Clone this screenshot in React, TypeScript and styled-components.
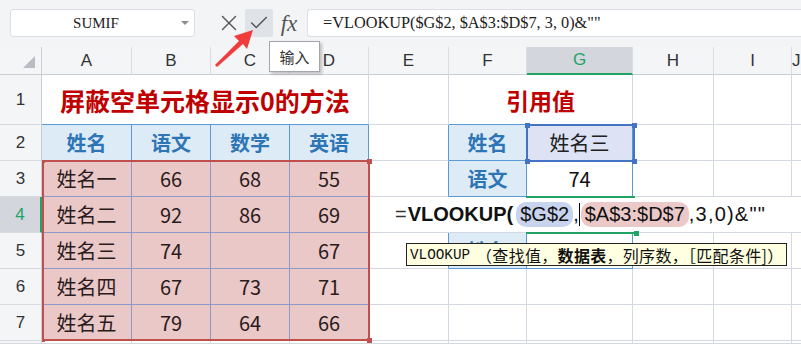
import React from 'react';
import styled, { createGlobalStyle } from 'styled-components';
import { X, Check } from 'lucide-react';

const GRID = '#d3d8e3';
const BLUE_LINE = '#5b9bd5';
const TABLE_LINE = '#8f99c6';
const GREEN = '#21a366';
const CJK = `'Noto Sans CJK SC', 'Noto Sans', sans-serif`;
const SONG = `'Liberation Serif', 'Noto Sans CJK SC', serif`;
const MONO = `'Liberation Mono', 'DejaVu Sans Mono', monospace`;

const GlobalStyle = createGlobalStyle`
  html, body {
    margin: 0;
    padding: 0;
    background: #fff;
  }
  body {
    font-family: ${CJK};
    overflow: hidden;
  }
`;

const Page = styled.div`
  position: relative;
  width: 801px;
  height: 344px;
  overflow: hidden;
  background: #fff;
`;

/* formula bar */

const Toolbar = styled.div`
  position: relative;
  z-index: 10;
  height: 47px;
  box-sizing: border-box;
  padding: 9px 0 0 10px;
  display: flex;
  align-items: flex-start;
  background: #f3f4f6;
`;

const NameBox = styled.div`
  width: 185px;
  height: 28px;
  box-sizing: border-box;
  border: 1px solid #dcdfe5;
  border-radius: 3px;
  background: #fff;
  display: flex;
  align-items: center;
`;

const NameText = styled.span`
  flex: 1;
  text-align: center;
  font-family: ${SONG};
  font-size: 15px;
  color: #222;
`;

const Caret = styled.span`
  width: 0;
  height: 0;
  border-left: 4px solid transparent;
  border-right: 4px solid transparent;
  border-top: 4px solid #8a8d93;
  margin-right: 5px;
`;

const IconButton = styled.div<{ $active?: boolean; $gap?: number }>`
  position: relative;
  width: 28px;
  height: 28px;
  margin-left: ${p => p.$gap ?? 2}px;
  display: flex;
  align-items: center;
  justify-content: center;
  border-radius: 2px;
  color: #555;
  background: ${p => (p.$active ? '#dfe2e7' : 'transparent')};
`;

const FxLabel = styled.span`
  font-family: 'Liberation Serif', serif;
  font-style: italic;
  font-size: 23px;
  color: #555;
  line-height: 1;
`;

const HoverTip = styled.div`
  position: absolute;
  top: 32px;
  left: 24px;
  width: 51px;
  height: 31px;
  box-sizing: border-box;
  border: 1px solid #a3a7ad;
  background: #fff;
  box-shadow: 2px 2px 3px rgba(0, 0, 0, 0.22);
  display: flex;
  align-items: center;
  justify-content: center;
  font-size: 15px;
  color: #333;
`;

const FormulaInput = styled.div`
  flex: 1;
  height: 28px;
  margin-left: 4px;
  box-sizing: border-box;
  border: 1px solid #dcdfe5;
  border-right: none;
  border-radius: 3px 0 0 3px;
  background: #fff;
  padding-left: 15px;
  font-family: ${SONG};
  font-size: 16.3px;
  line-height: 26px;
  color: #222;
  white-space: pre;
`;

const ArrowMark = styled.svg`
  position: absolute;
  left: 210px;
  top: 25px;
  z-index: 20;
`;

/* sheet */

const Sheet = styled.div`
  display: grid;
  grid-template-columns: 42px 90px 79px 79px 79px 80px 78px 106px 81px 78px 1fr;
  grid-template-rows: 28px 50px repeat(6, 36px) 1fr;
  height: 297px;
`;

const CornerCell = styled.div`
  grid-row: 1;
  grid-column: 1;
  box-sizing: border-box;
  background: #f4f5f7;
  border-right: 1px solid #c9cdd4;
  border-bottom: 1px solid #c9cdd4;
  display: flex;
  align-items: flex-end;
  justify-content: flex-end;
  padding: 0 6px 6px 0;
`;

const CornerMark = styled.span`
  width: 0;
  height: 0;
  border-left: 12px solid transparent;
  border-bottom: 12px solid #b9bdc3;
`;

const ColHead = styled.div<{ $c: number; $active?: boolean }>`
  grid-row: 1;
  grid-column: ${p => p.$c};
  box-sizing: border-box;
  display: flex;
  align-items: center;
  justify-content: center;
  background: ${p => (p.$active ? '#d3d6dc' : '#f4f5f7')};
  color: ${p => (p.$active ? GREEN : '#333')};
  border-right: 1px solid #dadde3;
  border-bottom: ${p => (p.$active ? `2px solid ${GREEN}` : '1px solid #c9cdd4')};
  font-family: 'Liberation Sans', sans-serif;
  font-size: 17px;
`;

const RowHead = styled.div<{ $r: number; $active?: boolean }>`
  grid-row: ${p => p.$r};
  grid-column: 1;
  box-sizing: border-box;
  display: flex;
  align-items: center;
  justify-content: center;
  background: ${p => (p.$active ? '#d3d6dc' : '#f4f5f7')};
  color: ${p => (p.$active ? GREEN : '#333')};
  border-bottom: 1px solid #d6d9de;
  border-right: ${p => (p.$active ? `2px solid ${GREEN}` : '1px solid #c9cdd4')};
  font-family: 'Liberation Sans', sans-serif;
  font-size: 17px;
`;

const Cell = styled.div<{ $r: number; $c: number; $span?: number; $right?: string; $size?: number }>`
  grid-row: ${p => p.$r};
  grid-column: ${p => p.$c} / span ${p => p.$span ?? 1};
  box-sizing: border-box;
  min-width: 0;
  display: flex;
  align-items: center;
  justify-content: center;
  background: #fff;
  border-right: 1px solid ${p => p.$right ?? GRID};
  border-bottom: 1px solid ${GRID};
  font-size: ${p => p.$size ?? 20}px;
  color: #2a1c1c;
  white-space: nowrap;
  overflow: hidden;
`;

const TitleCell = styled(Cell)`
  font-weight: 700;
  color: #c00000;
  border-bottom-color: ${BLUE_LINE};
`;

const HeadCell = styled(Cell)`
  background: #ddebf7;
  color: #2e75b6;
  font-weight: 700;
  border-right-color: ${BLUE_LINE};
  border-bottom-color: ${BLUE_LINE};
`;

const DataCell = styled(Cell)`
  background: #ebc8c8;
  border-right-color: ${TABLE_LINE};
  border-bottom-color: ${TABLE_LINE};
`;

const PickCell = styled(Cell)`
  background: #dde3f4;
  color: #222;
  border-right-color: ${BLUE_LINE};
  border-bottom-color: ${BLUE_LINE};
`;

const ValueCell = styled(Cell)`
  color: #111;
  border-right-color: ${BLUE_LINE};
  border-bottom-color: ${BLUE_LINE};
`;

/* selections drawn over the cells */

const RangeFrame = styled.div`
  grid-area: 4 / 2 / 9 / 6;
  position: relative;
  z-index: 1;
  pointer-events: none;
  margin: -1px -1px 0 0;
  border: 2px solid #c0504d;
`;

const PickFrame = styled.div`
  grid-area: 3 / 8 / 4 / 9;
  position: relative;
  z-index: 1;
  pointer-events: none;
  margin: -1px -2px -1px -1px;
  border: 2px solid #4472c4;
`;

const ActiveFrame = styled.div`
  grid-area: 5 / 8 / 6 / 9;
  position: relative;
  z-index: 3;
  pointer-events: none;
  margin: -1px -2px -1px -1px;
  border-top: 2px solid ${GREEN};
  border-bottom: 2px solid ${GREEN};
`;

type Corner = 'tl' | 'tr' | 'bl' | 'br';

const Handle = styled.span<{ $at: Corner; $size: number; $color: string }>`
  position: absolute;
  width: ${p => p.$size}px;
  height: ${p => p.$size}px;
  background: ${p => p.$color};
  ${p => (p.$at[0] === 't' ? 'top' : 'bottom')}: ${p => -1 - p.$size / 2}px;
  ${p => (p.$at[1] === 'l' ? 'left' : 'right')}: ${p => -1 - p.$size / 2}px;
`;

/* in-cell editor */

const Editor = styled.div`
  grid-area: 5 / 6 / 6 / -1;
  position: relative;
  z-index: 2;
  margin: 0 0 1px 1px;
  background: #fff;
  display: flex;
  align-items: center;
  padding-left: 25px;
  font-family: 'Liberation Sans', Arial, sans-serif;
  font-size: 20px;
  color: #111;
  white-space: nowrap;
`;

const Eq = styled.span`
  color: #333;
  margin-right: 1px;
`;

const FnName = styled.span`
  font-weight: 700;
`;

const Ref = styled.span<{ $tint: string; $gap?: number }>`
  display: inline-block;
  margin-left: ${p => p.$gap ?? 0}px;
  padding: 0 4px;
  line-height: 25px;
  border-radius: 10px;
  background: ${p => p.$tint};
`;

const Tail = styled.span`
  letter-spacing: 1.2px;
`;

const TextCursor = styled.span`
  width: 1px;
  height: 23px;
  background: #000;
`;

const ArgTip = styled.div`
  position: absolute;
  left: 36px;
  top: 46px;
  width: max-content;
  height: 23px;
  box-sizing: border-box;
  padding: 0 2px 0 3px;
  border: 1px solid #222;
  background: #ffffe1;
  display: flex;
  align-items: center;
  font-family: ${CJK};
  font-size: 16px;
  letter-spacing: 0.3px;
  color: #111;
`;

const TipFn = styled.span`
  font-family: ${MONO};
  font-size: 14.3px;
  letter-spacing: 0;
  margin-right: 6px;
`;

const TipBold = styled.b`
  font-weight: 700;
`;

type Kind = 'plain' | 'title' | 'head' | 'data' | 'pick' | 'value';
interface Spec {
  text?: string;
  kind?: Kind;
  span?: number;
  right?: string;
  size?: number;
}

const CELL_BY_KIND = {
  plain: Cell,
  title: TitleCell,
  head: HeadCell,
  data: DataCell,
  pick: PickCell,
  value: ValueCell,
};

const COLS = ['A', 'B', 'C', 'D', 'E', 'F', 'G', 'H', 'I', 'J'];
const ACTIVE_COL = 'G';
const ACTIVE_ROW = 4;
const VISIBLE_ROWS = 7;

const blank = (n: number): Spec[] => Array.from({ length: n }, () => ({}));
const heads = (vals: string[]): Spec[] => vals.map(text => ({ text, kind: 'head' as Kind }));
const data = (vals: string[]): Spec[] => vals.map(text => ({ text, kind: 'data' as Kind }));

const ROWS: Spec[][] = [
  [
    { text: '屏蔽空单元格显示0的方法', kind: 'title', span: 4, size: 25 },
    {},
    { text: '引用值', kind: 'title', span: 2, size: 23 },
    ...blank(3),
  ],
  [...heads(['姓名', '语文', '数学', '英语']), { right: BLUE_LINE }, ...heads(['姓名']), { text: '姓名三', kind: 'pick' }, ...blank(3)],
  [...data(['姓名一', '66', '68', '55']), { right: BLUE_LINE }, ...heads(['语文']), { text: '74', kind: 'value' }, ...blank(3)],
  [...data(['姓名二', '92', '86', '69']), ...blank(6)],
  [...data(['姓名三', '74', '', '67']), { right: BLUE_LINE }, ...heads(['姓名']), { kind: 'value' }, ...blank(3)],
  [...data(['姓名四', '67', '73', '71']), ...blank(6)],
  [...data(['姓名五', '79', '64', '66']), ...blank(6)],
  blank(10),
];

const corners: Corner[] = ['tl', 'tr', 'bl', 'br'];

const renderRow = (row: Spec[], r: number) => {
  let c = 2;
  return row.map((spec, i) => {
    const Comp = CELL_BY_KIND[spec.kind ?? 'plain'];
    const col = c;
    c += spec.span ?? 1;
    return (
      <Comp key={`${r}-${i}`} $r={r + 2} $c={col} $span={spec.span} $right={spec.right} $size={spec.size}>
        {spec.text}
      </Comp>
    );
  });
};

export default function App() {
  return (
    <Page>
      <GlobalStyle />
      <Toolbar>
        <NameBox>
          <NameText>SUMIF</NameText>
          <Caret />
        </NameBox>
        <IconButton $gap={20}>
          <X size={26} strokeWidth={1.3} />
        </IconButton>
        <IconButton $active>
          <Check size={22} strokeWidth={1.6} />
          <HoverTip>输入</HoverTip>
        </IconButton>
        <IconButton>
          <FxLabel>fx</FxLabel>
        </IconButton>
        <FormulaInput>{'=VLOOKUP($G$2, $A$3:$D$7, 3, 0)&""'}</FormulaInput>
      </Toolbar>

      <ArrowMark width="50" height="45" viewBox="0 0 50 45">
        <polygon points="43,5 24,11 29,16 5,40 7,42 33,19 37,24" fill="#f03c3c" />
      </ArrowMark>

      <Sheet>
        <CornerCell>
          <CornerMark />
        </CornerCell>
        {COLS.map((name, i) => (
          <ColHead key={name} $c={i + 2} $active={name === ACTIVE_COL}>
            {name}
          </ColHead>
        ))}
        {ROWS.map((_, i) => (
          <RowHead key={i} $r={i + 2} $active={i + 1 === ACTIVE_ROW}>
            {i < VISIBLE_ROWS ? i + 1 : null}
          </RowHead>
        ))}
        {ROWS.map(renderRow)}

        <RangeFrame>
          <Handle $at="tl" $size={3} $color="#c0504d" />
          <Handle $at="tr" $size={5} $color="#c0504d" />
          <Handle $at="bl" $size={3} $color="#c0504d" />
          <Handle $at="br" $size={5} $color="#c0504d" />
        </RangeFrame>
        <PickFrame>
          {corners.map(at => (
            <Handle key={at} $at={at} $size={5} $color="#4472c4" />
          ))}
        </PickFrame>
        <ActiveFrame>
          <Handle $at="br" $size={5} $color={GREEN} />
        </ActiveFrame>

        <Editor>
          <Eq>=</Eq>
          <FnName>VLOOKUP(</FnName>
          <Ref $tint="#c8d3ee" $gap={3}>$G$2</Ref>
          <span>,</span>
          <TextCursor />
          <Ref $tint="#ecc9c9" $gap={1}>$A$3:$D$7</Ref>
          <Tail>{',3,0)&""'}</Tail>
          <ArgTip>
            <TipFn>VLOOKUP</TipFn>（查找值，<TipBold>数据表</TipBold>，列序数，［匹配条件]）
          </ArgTip>
        </Editor>
      </Sheet>
    </Page>
  );
}
